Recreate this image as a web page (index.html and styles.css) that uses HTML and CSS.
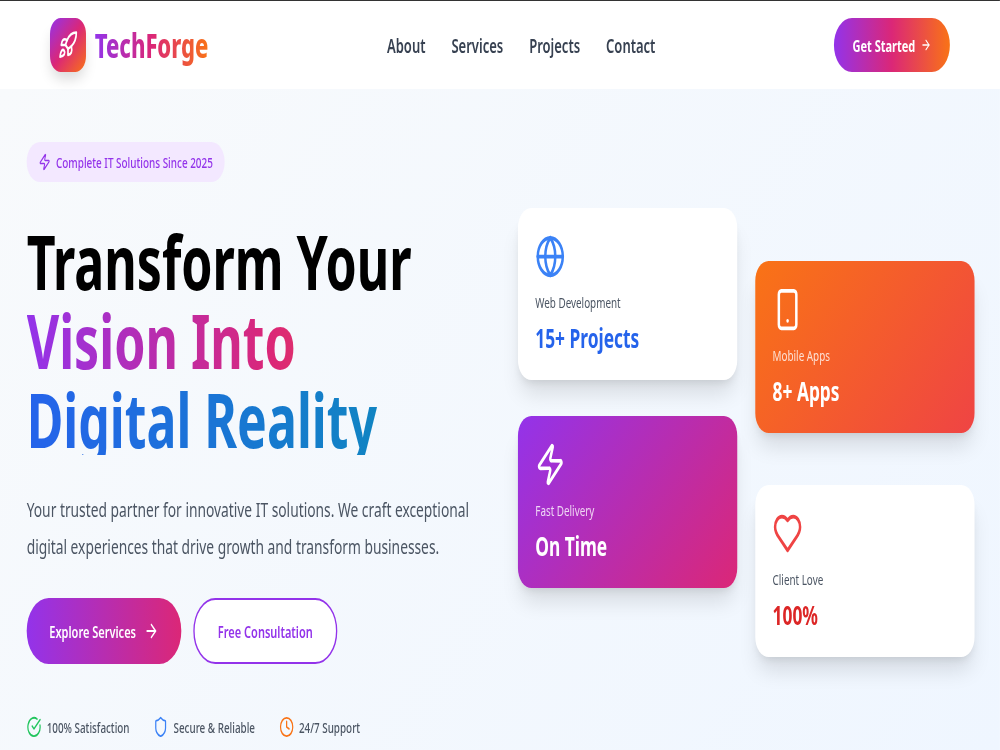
FILE: index.html
```html
<!DOCTYPE html>
<html>
  <head>
    <title>TechForge</title>
    <link rel="stylesheet" href="styles.css">
    <meta name="viewport" content="width=device-width, initial-scale=1">
    <meta charset="utf-8">
  </head>
  <body>
    <div class="page">
      <nav class="navbar">
        <div class="logo">
          <span class="logo-icon">
            <svg class="icon-logo" viewBox="0 0 24 24"><path d="M4.5 16.5c-1.5 1.26-2 5-2 5s3.74-.5 5-2c.71-.84.7-2.13-.09-2.91a2.18 2.18 0 0 0-2.91-.09z"/><path d="m12 15-3-3a22 22 0 0 1 2-3.95A12.88 12.88 0 0 1 22 2c0 2.72-.78 7.5-6 11a22.35 22.35 0 0 1-4 2z"/><path d="M9 12H4s.55-3.03 2-4c1.62-1.08 5 0 5 0"/><path d="M12 15v5s3.03-.55 4-2c1.08-1.62 0-5 0-5"/></svg>
          </span>
          <span class="logo-text">TechForge</span>
        </div>
        <div class="nav-links">
          <a>About</a>
          <a>Services</a>
          <a>Projects</a>
          <a>Contact</a>
        </div>
        <a class="btn-start">Get Started
          <svg class="icon-small" viewBox="0 0 24 24"><path d="M5 12h14"/><path d="m12 5 7 7-7 7"/></svg>
        </a>
      </nav>
      <section class="hero">
        <div class="hero-left">
          <div class="badge">
            <svg class="icon-small" viewBox="0 0 24 24"><path d="M4 14a1 1 0 0 1-.78-1.63l9.9-10.2a.5.5 0 0 1 .86.46l-1.92 6.02A1 1 0 0 0 13 10h7a1 1 0 0 1 .78 1.63l-9.9 10.2a.5.5 0 0 1-.86-.46l1.92-6.02A1 1 0 0 0 11 14z"/></svg>
            Complete IT Solutions Since 2025
          </div>
          <h1 class="title">
            Transform Your
            <span class="title-purple">Vision Into</span>
            <span class="title-blue">Digital Reality</span>
          </h1>
          <p class="lead">Your trusted partner for innovative IT solutions. We craft exceptional digital experiences that drive growth and transform businesses.</p>
          <div class="actions">
            <a class="btn-primary">Explore Services
              <svg class="icon-arrow" viewBox="0 0 24 24"><path d="M5 12h14"/><path d="m12 5 7 7-7 7"/></svg>
            </a>
            <a class="btn-outline">Free Consultation</a>
          </div>
          <div class="trust">
            <span class="trust-item">
              <svg class="icon-trust green" viewBox="0 0 24 24"><path d="M21.801 10A10 10 0 1 1 17 3.335"/><path d="m9 11 3 3L22 4"/></svg>
              100% Satisfaction
            </span>
            <span class="trust-item">
              <svg class="icon-trust blue" viewBox="0 0 24 24"><path d="M20 13c0 5-3.5 7.5-7.66 8.95a1 1 0 0 1-.67-.01C7.5 20.5 4 18 4 13V6a1 1 0 0 1 1-1c2 0 4.5-1.2 6.24-2.72a1.17 1.17 0 0 1 1.52 0C14.51 3.81 17 5 19 5a1 1 0 0 1 1 1z"/></svg>
              Secure &amp; Reliable
            </span>
            <span class="trust-item">
              <svg class="icon-trust orange" viewBox="0 0 24 24"><circle cx="12" cy="12" r="10"/><polyline points="12 6 12 12 16 14"/></svg>
              24/7 Support
            </span>
          </div>
        </div>
        <div class="hero-cards">
          <div class="card-col col-a">
            <div class="card card-white">
              <svg class="icon-card blue" viewBox="0 0 24 24"><circle cx="12" cy="12" r="10"/><path d="M12 2a14.5 14.5 0 0 0 0 20 14.5 14.5 0 0 0 0-20"/><path d="M2 12h20"/></svg>
              <div class="card-label">Web Development</div>
              <div class="card-value value-blue">15+ Projects</div>
            </div>
            <div class="card card-purple">
              <svg class="icon-card" viewBox="0 0 24 24"><path d="M4 14a1 1 0 0 1-.78-1.63l9.9-10.2a.5.5 0 0 1 .86.46l-1.92 6.02A1 1 0 0 0 13 10h7a1 1 0 0 1 .78 1.63l-9.9 10.2a.5.5 0 0 1-.86-.46l1.92-6.02A1 1 0 0 0 11 14z"/></svg>
              <div class="card-label">Fast Delivery</div>
              <div class="card-value">On Time</div>
            </div>
          </div>
          <div class="card-col col-b">
            <div class="card card-orange">
              <svg class="icon-card" viewBox="0 0 24 24"><rect x="5" y="2" width="14" height="20" rx="2"/><path d="M12 18h.01"/></svg>
              <div class="card-label">Mobile Apps</div>
              <div class="card-value">8+ Apps</div>
            </div>
            <div class="card card-white">
              <svg class="icon-card red" viewBox="0 0 24 24"><path d="M19 14c1.49-1.46 3-3.21 3-5.5A5.5 5.5 0 0 0 16.5 3c-1.76 0-3 .5-4.5 2-1.5-1.5-2.74-2-4.5-2A5.5 5.5 0 0 0 2 8.5c0 2.3 1.5 4.05 3 5.5l7 7Z"/></svg>
              <div class="card-label">Client Love</div>
              <div class="card-value value-red">100%</div>
            </div>
          </div>
        </div>
      </section>
    </div>
  </body>
</html>
```

FILE: styles.css
```css
html, body {
  margin: 0;
  height: 100%;
  overflow: hidden;
  background: #f8fafc;
}
body {
  font-family: "Noto Sans", "Open Sans", sans-serif;
}
svg {
  fill: none;
  stroke: currentColor;
  stroke-width: 2;
  stroke-linecap: round;
  stroke-linejoin: round;
  flex-shrink: 0;
}
/* the whole page is squeezed sideways, 1500 wide into 1000 */
.page {
  width: 1500px;
  height: 750px;
  transform: scaleX(0.6666);
  transform-origin: 0 0;
  overflow: hidden;
}
.navbar {
  display: flex;
  align-items: center;
  justify-content: space-between;
  box-sizing: border-box;
  height: 89px;
  padding: 0 75px;
  background: #fff;
  border-top: 1px solid #333;
}
.logo {
  display: flex;
  align-items: center;
  gap: 13px;
}
.logo-icon {
  display: flex;
  align-items: center;
  justify-content: center;
  width: 54px;
  height: 54px;
  border-radius: 16px;
  background: linear-gradient(135deg, #9333ea, #db2777, #f97316);
  box-shadow: 0 10px 15px -3px rgba(0, 0, 0, 0.15);
  color: #fff;
}
.icon-logo {
  width: 30px;
  height: 30px;
}
.logo-text {
  font-size: 33px;
  font-weight: 800;
  background: linear-gradient(90deg, #9333ea, #db2777, #f97316);
  -webkit-background-clip: text;
  background-clip: text;
  color: transparent;
}
.nav-links {
  display: flex;
  gap: 39px;
}
.nav-links a {
  font-size: 19.5px;
  font-weight: 600;
  color: #374151;
}
.btn-start {
  display: flex;
  align-items: center;
  justify-content: center;
  gap: 8px;
  width: 174px;
  height: 54px;
  border-radius: 27px;
  background: linear-gradient(90deg, #9333ea, #db2777, #f97316);
  color: #fff;
  font-size: 16.5px;
  font-weight: 700;
}
.icon-small {
  width: 16px;
  height: 16px;
}
.hero {
  display: flex;
  align-items: flex-start;
  height: 661px;
  padding-left: 40px;
  background: linear-gradient(135deg, #f8fafc, #eff6ff);
}
.hero-left {
  width: 737px;
  flex-shrink: 0;
  padding-top: 53px;
}
.badge {
  display: inline-flex;
  align-items: center;
  gap: 8px;
  height: 40px;
  padding: 0 18px;
  border-radius: 20px;
  background: #f3e8ff;
  color: #9333ea;
  font-size: 14.9px;
  font-weight: 500;
}
.badge .icon-small {
  width: 18px;
  height: 18px;
}
.title {
  margin: 40px 0 0;
  font-size: 75px;
  line-height: 79px;
  font-weight: 700;
  color: #000;
}
.title span {
  display: block;
  -webkit-background-clip: text;
  background-clip: text;
  color: transparent;
}
.title-purple {
  background: linear-gradient(90deg, #9333ea, #db2777, #f97316);
}
/* block stops short, the reference cuts the descenders here */
.title-blue {
  height: 75px;
  margin-bottom: 4px;
  background: linear-gradient(90deg, #2563eb, #0891b2);
}
.lead {
  margin: 36px 0 0;
  width: 700px;
  font-size: 20.7px;
  line-height: 37px;
  color: #4b5563;
}
.actions {
  display: flex;
  gap: 18px;
  margin-top: 33px;
}
.btn-primary, .btn-outline {
  display: flex;
  align-items: center;
  justify-content: center;
  box-sizing: border-box;
  height: 66px;
  border-radius: 33px;
  font-size: 16.5px;
  font-weight: 600;
}
.btn-primary {
  gap: 12px;
  width: 232px;
  background: linear-gradient(90deg, #9333ea, #db2777);
  color: #fff;
}
.icon-arrow {
  width: 22px;
  height: 22px;
}
.btn-outline {
  width: 216px;
  border: 2px solid #9333ea;
  background: #fff;
  color: #9333ea;
}
.trust {
  display: flex;
  gap: 36px;
  margin-top: 52px;
  color: #4b5563;
  font-size: 14.8px;
  font-weight: 500;
}
.trust-item {
  display: flex;
  align-items: center;
  gap: 8px;
}
.icon-trust {
  width: 22px;
  height: 22px;
}
.green { color: #22c55e; }
.blue { color: #3b82f6; }
.orange { color: #f97316; }
.red { color: #ef4444; }
.hero-cards {
  display: flex;
  gap: 27px;
}
.card-col {
  display: flex;
  flex-direction: column;
  width: 329px;
}
.col-a {
  gap: 36px;
  margin-top: 119px;
}
.col-b {
  gap: 52px;
  margin-top: 172px;
}
.card {
  box-sizing: border-box;
  height: 172px;
  padding: 26px 26px 0;
  border-radius: 20px;
  box-shadow: 0 20px 25px -5px rgba(0, 0, 0, 0.1), 0 8px 10px -6px rgba(0, 0, 0, 0.1);
}
.card-white {
  background: #fff;
}
.card-purple {
  background: linear-gradient(135deg, #9333ea, #db2777);
  color: #fff;
}
.card-orange {
  background: linear-gradient(135deg, #f97316, #ef4444);
  color: #fff;
}
.icon-card {
  display: block;
  width: 45px;
  height: 45px;
}
.card-label {
  margin-top: 12px;
  font-size: 14.8px;
  line-height: 22px;
  color: #4b5563;
}
.card-purple .card-label, .card-orange .card-label {
  color: rgba(255, 255, 255, 0.8);
}
.card-value {
  margin-top: 9px;
  font-size: 26px;
  line-height: 32px;
  font-weight: 700;
}
.value-blue { color: #2563eb; }
.value-red { color: #dc2626; }
```
